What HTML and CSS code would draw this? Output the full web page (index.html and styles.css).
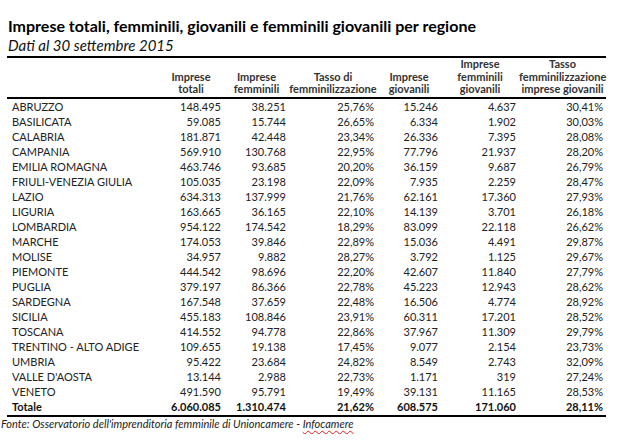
FILE: index.html
```html
<!DOCTYPE html>
<html lang="it">
<head>
<meta charset="utf-8">
<title>Imprese per regione</title>
<link rel="stylesheet" href="styles.css">
</head>
<body>
<div class="page">
  <h1 class="title">Imprese totali, femminili, giovanili e femminili giovanili per regione</h1>
  <p class="subtitle">Dati al 30 settembre 2015</p>
  <table class="data">
    <colgroup>
      <col class="c-a"><col class="c-b"><col class="c-c"><col class="c-d"><col class="c-e"><col class="c-f"><col class="c-g">
    </colgroup>
    <thead>
      <tr>
        <th></th>
        <th>Imprese<br>totali</th>
        <th>Imprese<br>femminili</th>
        <th>Tasso di<br>femminilizzazione</th>
        <th>Imprese<br>giovanili</th>
        <th>Imprese<br>femminili<br>giovanili</th>
        <th>Tasso<br>femminilizzazione<br>imprese giovanili</th>
      </tr>
    </thead>
    <tbody>
      <tr><td>ABRUZZO</td><td>148.495</td><td>38.251</td><td>25,76%</td><td>15.246</td><td>4.637</td><td>30,41%</td></tr>
      <tr><td>BASILICATA</td><td>59.085</td><td>15.744</td><td>26,65%</td><td>6.334</td><td>1.902</td><td>30,03%</td></tr>
      <tr><td>CALABRIA</td><td>181.871</td><td>42.448</td><td>23,34%</td><td>26.336</td><td>7.395</td><td>28,08%</td></tr>
      <tr><td>CAMPANIA</td><td>569.910</td><td>130.768</td><td>22,95%</td><td>77.796</td><td>21.937</td><td>28,20%</td></tr>
      <tr><td>EMILIA ROMAGNA</td><td>463.746</td><td>93.685</td><td>20,20%</td><td>36.159</td><td>9.687</td><td>26,79%</td></tr>
      <tr><td>FRIULI-VENEZIA GIULIA</td><td>105.035</td><td>23.198</td><td>22,09%</td><td>7.935</td><td>2.259</td><td>28,47%</td></tr>
      <tr><td>LAZIO</td><td>634.313</td><td>137.999</td><td>21,76%</td><td>62.161</td><td>17.360</td><td>27,93%</td></tr>
      <tr><td>LIGURIA</td><td>163.665</td><td>36.165</td><td>22,10%</td><td>14.139</td><td>3.701</td><td>26,18%</td></tr>
      <tr><td>LOMBARDIA</td><td>954.122</td><td>174.542</td><td>18,29%</td><td>83.099</td><td>22.118</td><td>26,62%</td></tr>
      <tr><td>MARCHE</td><td>174.053</td><td>39.846</td><td>22,89%</td><td>15.036</td><td>4.491</td><td>29,87%</td></tr>
      <tr><td>MOLISE</td><td>34.957</td><td>9.882</td><td>28,27%</td><td>3.792</td><td>1.125</td><td>29,67%</td></tr>
      <tr><td>PIEMONTE</td><td>444.542</td><td>98.696</td><td>22,20%</td><td>42.607</td><td>11.840</td><td>27,79%</td></tr>
      <tr><td>PUGLIA</td><td>379.197</td><td>86.366</td><td>22,78%</td><td>45.223</td><td>12.943</td><td>28,62%</td></tr>
      <tr><td>SARDEGNA</td><td>167.548</td><td>37.659</td><td>22,48%</td><td>16.506</td><td>4.774</td><td>28,92%</td></tr>
      <tr><td>SICILIA</td><td>455.183</td><td>108.846</td><td>23,91%</td><td>60.311</td><td>17.201</td><td>28,52%</td></tr>
      <tr><td>TOSCANA</td><td>414.552</td><td>94.778</td><td>22,86%</td><td>37.967</td><td>11.309</td><td>29,79%</td></tr>
      <tr><td>TRENTINO - ALTO ADIGE</td><td>109.655</td><td>19.138</td><td>17,45%</td><td>9.077</td><td>2.154</td><td>23,73%</td></tr>
      <tr><td>UMBRIA</td><td>95.422</td><td>23.684</td><td>24,82%</td><td>8.549</td><td>2.743</td><td>32,09%</td></tr>
      <tr><td>VALLE D'AOSTA</td><td>13.144</td><td>2.988</td><td>22,73%</td><td>1.171</td><td>319</td><td>27,24%</td></tr>
      <tr><td>VENETO</td><td>491.590</td><td>95.791</td><td>19,49%</td><td>39.131</td><td>11.165</td><td>28,53%</td></tr>
      <tr class="total"><td>Totale</td><td>6.060.085</td><td>1.310.474</td><td>21,62%</td><td>608.575</td><td>171.060</td><td>28,11%</td></tr>
    </tbody>
  </table>
  <p class="source">Fonte: Osservatorio dell'imprenditoria femminile di Unioncamere - <span class="misspelled">Infocamere</span></p>
</div>
</body>
</html>
```

FILE: styles.css
```css
html, body {
  margin: 0;
  padding: 0;
  background: #ffffff;
}

.page {
  width: 632px;
  height: 443px;
  font-family: Lato, "Open Sans", "Liberation Sans", sans-serif;
  color: #222;
}

.title {
  margin: 0;
  padding: 17px 0 0 8px;
  font-size: 16px;
  line-height: 18px;
  font-weight: 700;
  color: #000;
}

.subtitle {
  margin: 0;
  padding: 1px 0 0 8px;
  font-size: 15px;
  line-height: 18px;
  font-style: italic;
  color: #111;
}

.data {
  margin: 2px 0 0 7px;
  border-collapse: collapse;
  table-layout: fixed;
  width: 599px;
  font-size: 11px;
}

.c-a { width: 151px; }
.c-b { width: 66px; }
.c-c { width: 65px; }
.c-d { width: 88px; }
.c-e { width: 64px; }
.c-f { width: 78px; }
.c-g { width: 87px; }

.data thead tr {
  border-top: 2px solid #000;
  border-bottom: 2px solid #000;
}

.data th {
  height: 37px;
  padding: 0 0 1px 0;
  vertical-align: bottom;
  text-align: center;
  font-weight: 700;
  line-height: 12.5px;
  color: #333;
  white-space: nowrap;
}

.data td {
  height: 15px;
  padding: 0 3px 0 0;
  line-height: 15px;
  text-align: right;
  white-space: nowrap;
}

.data td:first-child {
  text-align: left;
  padding: 0 0 0 5px;
}

.data tr.total {
  border-bottom: 2px solid #000;
}

.data tr.total td {
  height: 16px;
  line-height: 16px;
  font-weight: 700;
  color: #111;
}

.source {
  margin: 0;
  padding: 0 0 0 1px;
  font-size: 11px;
  line-height: 14px;
  font-style: italic;
  color: #222;
}

.misspelled {
  text-decoration: underline wavy #e02020;
  text-decoration-thickness: 1px;
  text-underline-offset: 2px;
}
```
